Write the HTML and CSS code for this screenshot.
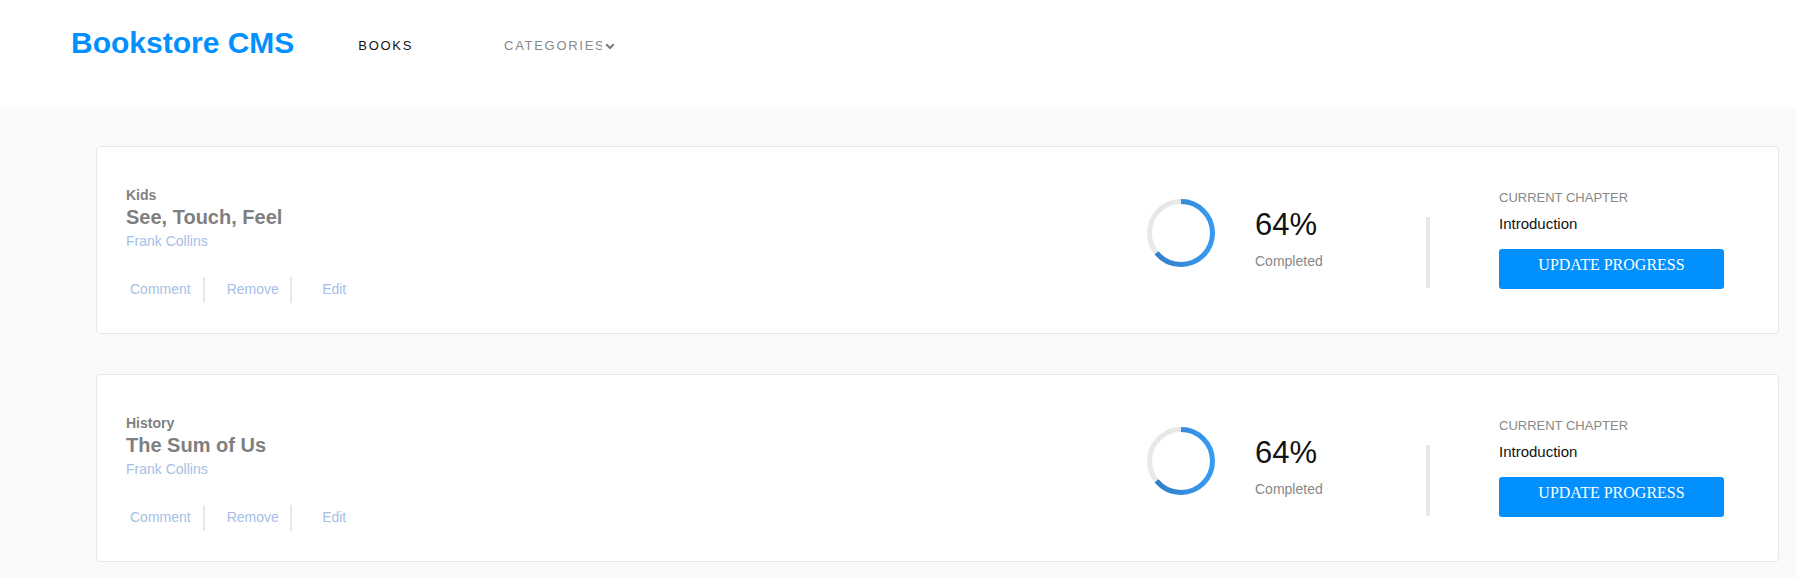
FILE: index.html
```html
<!DOCTYPE html>
<html lang="en">
<head>
<meta charset="utf-8">
<title>Bookstore CMS</title>
<link rel="stylesheet" href="styles.css">
</head>
<body>
<header class="header">
  <div class="logo">Bookstore CMS</div>
  <nav class="nav">
    <span class="nav-link active">BOOKS</span>
    <span class="nav-select">
      <span class="nav-select-text">CATEGORIES</span>
      <svg class="chevron" width="10" height="7" viewBox="0 0 10 7"><polyline points="1.2,1.2 5,5 8.8,1.2" fill="none" stroke="#7a7a7a" stroke-width="2"/></svg>
    </span>
  </nav>
</header>
<main class="main">
  <section class="card">
    <div class="book-info">
      <div class="book-category">Kids</div>
      <div class="book-title">See, Touch, Feel</div>
      <div class="book-author">Frank Collins</div>
      <div class="actions">
        <span class="action first">Comment</span>
        <span class="action-divider d1"></span>
        <span class="action second">Remove</span>
        <span class="action-divider d2"></span>
        <span class="action third">Edit</span>
      </div>
    </div>
    <svg class="ring" width="68" height="68" viewBox="0 0 68 68">
      <defs>
        <linearGradient id="g1" x1="0" y1="0" x2="0" y2="68" gradientUnits="userSpaceOnUse">
          <stop offset="0" stop-color="#307bbe"/>
          <stop offset="1" stop-color="#379cf6"/>
        </linearGradient>
      </defs>
      <circle cx="34" cy="34" r="31.5" fill="none" stroke="#e8e8e8" stroke-width="5"/>
      <circle cx="34" cy="34" r="31.5" fill="none" stroke="url(#g1)" stroke-width="5" stroke-dasharray="126.7 197.9" transform="rotate(-90 34 34)"/>
    </svg>
    <div class="percent">
      <div class="percent-value">64%</div>
      <div class="percent-label">Completed</div>
    </div>
    <div class="progress-divider"></div>
    <div class="chapter">
      <div class="chapter-label">CURRENT CHAPTER</div>
      <div class="chapter-name">Introduction</div>
      <div class="update-btn">UPDATE PROGRESS</div>
    </div>
  </section>
  <section class="card">
    <div class="book-info">
      <div class="book-category">History</div>
      <div class="book-title">The Sum of Us</div>
      <div class="book-author">Frank Collins</div>
      <div class="actions">
        <span class="action first">Comment</span>
        <span class="action-divider d1"></span>
        <span class="action second">Remove</span>
        <span class="action-divider d2"></span>
        <span class="action third">Edit</span>
      </div>
    </div>
    <svg class="ring" width="68" height="68" viewBox="0 0 68 68">
      <defs>
        <linearGradient id="g2" x1="0" y1="0" x2="0" y2="68" gradientUnits="userSpaceOnUse">
          <stop offset="0" stop-color="#307bbe"/>
          <stop offset="1" stop-color="#379cf6"/>
        </linearGradient>
      </defs>
      <circle cx="34" cy="34" r="31.5" fill="none" stroke="#e8e8e8" stroke-width="5"/>
      <circle cx="34" cy="34" r="31.5" fill="none" stroke="url(#g2)" stroke-width="5" stroke-dasharray="126.7 197.9" transform="rotate(-90 34 34)"/>
    </svg>
    <div class="percent">
      <div class="percent-value">64%</div>
      <div class="percent-label">Completed</div>
    </div>
    <div class="progress-divider"></div>
    <div class="chapter">
      <div class="chapter-label">CURRENT CHAPTER</div>
      <div class="chapter-name">Introduction</div>
      <div class="update-btn">UPDATE PROGRESS</div>
    </div>
  </section>
</main>
</body>
</html>
```
FILE: styles.css
```css
* {
  box-sizing: border-box;
}

html, body {
  margin: 0;
  padding: 0;
}

body {
  background: #fafafa;
  font-family: "Liberation Sans", Arial, sans-serif;
  color: #121212;
  width: 1796px;
  height: 578px;
  overflow: hidden;
}

.header {
  display: flex;
  align-items: flex-start;
  height: 107px;
  padding-left: 71px;
  background: #fff;
}

.logo {
  margin-top: 26px;
  font-size: 30px;
  font-weight: bold;
  line-height: normal;
  color: #0290ff;
  white-space: nowrap;
}

.nav {
  display: flex;
  align-items: center;
  margin-top: 38px;
  margin-left: 64px;
}

.nav-link {
  font-size: 13px;
  letter-spacing: 1.7px;
  line-height: 15px;
  color: #121212;
}

.nav-select {
  display: flex;
  align-items: center;
  margin-left: 91px;
}

.nav-select-text {
  display: block;
  width: 97.5px;
  overflow: hidden;
  white-space: nowrap;
  font-size: 13px;
  letter-spacing: 1.7px;
  line-height: 15px;
  color: #888;
}

.chevron {
  display: block;
  margin-left: 3px;
  margin-top: 1px;
}

.main {
  display: flex;
  flex-direction: column;
  gap: 40px;
  padding: 39px 17px 0 96px;
}

.card {
  display: flex;
  align-items: flex-start;
  height: 188px;
  padding: 0 54px 0 29px;
  background: #fff;
  border: 1px solid #e8e8e8;
  border-radius: 4px;
}

.book-info {
  flex: 1;
  padding-top: 40px;
}

.book-category {
  font-size: 14px;
  font-weight: bold;
  line-height: 16px;
  color: #7f7f7f;
}

.book-title {
  margin-top: 3px;
  font-size: 20px;
  font-weight: bold;
  line-height: 23px;
  color: #7f7f7f;
}

.book-author {
  margin-top: 4px;
  font-size: 14px;
  line-height: 16px;
  color: #a6c0e6;
}

.actions {
  display: flex;
  align-items: center;
  height: 26px;
  margin-top: 28px;
}

.action {
  font-size: 14px;
  line-height: 16px;
  color: #a6c0e6;
  margin-top: -2px;
}

.action.first {
  margin-left: 4px;
}

.action-divider {
  width: 2px;
  height: 26px;
  background: #e8e8e8;
}

.action-divider.d1 {
  margin-left: 12.5px;
  margin-right: 21.5px;
}

.action-divider.d2 {
  margin-left: 11.3px;
  margin-right: 30px;
}

.ring {
  display: block;
  flex: none;
  margin-top: 52px;
}

.percent {
  flex: none;
  width: 171px;
  margin-top: 60px;
  margin-left: 40.4px;
}

.percent-value {
  font-size: 31px;
  line-height: 36px;
  color: #121212;
}

.percent-label {
  margin-top: 10px;
  font-size: 14px;
  line-height: 16px;
  color: #888;
}

.progress-divider {
  flex: none;
  width: 4px;
  height: 71px;
  margin-top: 70px;
  background: #e8e8e8;
}

.chapter {
  flex: none;
  width: 225px;
  margin-left: 69px;
  margin-top: 43px;
}

.chapter-label {
  font-size: 13px;
  line-height: 15px;
  color: #888;
}

.chapter-name {
  margin-top: 9.5px;
  font-size: 15px;
  line-height: 17px;
  color: #121212;
}

.update-btn {
  height: 40px;
  margin-top: 17px;
  padding-top: 7px;
  background: #0290ff;
  border-radius: 3px;
  color: #fff;
  font-family: "Liberation Serif", "Times New Roman", serif;
  font-size: 16px;
  line-height: 18px;
  text-align: center;
}
```
